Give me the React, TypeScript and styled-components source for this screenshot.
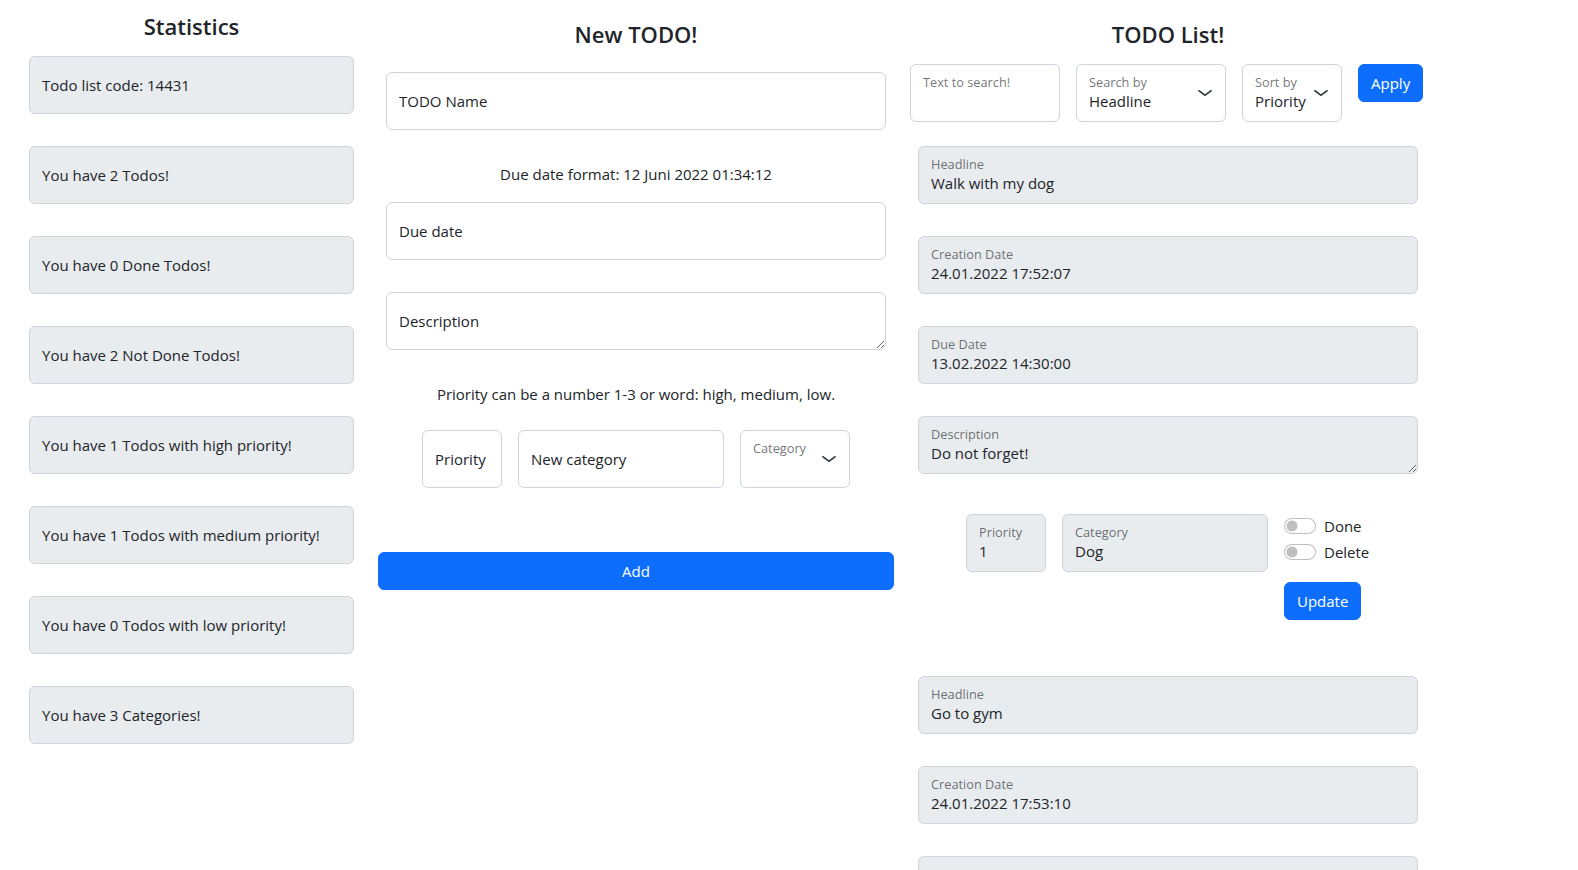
import React from "react";
import styled, { createGlobalStyle } from "styled-components";

const GlobalStyle = createGlobalStyle`
  html, body {
    margin: 0;
    padding: 0;
    background: #ffffff;
    scrollbar-width: none;
  }
  html::-webkit-scrollbar, body::-webkit-scrollbar { display: none; }
  body {
    font-family: "Open Sans", "Noto Sans", "DejaVu Sans", sans-serif;
    font-size: 15px;
    line-height: 24px;
    color: #212529;
  }
  *, *::before, *::after { box-sizing: border-box; }
`;

const Page = styled.main`
  display: flex;
  align-items: flex-start;
  padding-left: 29px;
`;

const Column = styled.section<{ $width: number; $after: number }>`
  flex: none;
  width: ${(p) => p.$width}px;
  margin-right: ${(p) => p.$after}px;
  display: flex;
  flex-direction: column;
`;

const Title = styled.h2<{ $top: number; $bottom: number }>`
  margin: ${(p) => p.$top}px 0 ${(p) => p.$bottom}px;
  font-size: 22px;
  font-weight: 600;
  line-height: 34px;
  text-align: center;
  color: #212529;
`;

/* ---------- Statistics ---------- */

const StatList = styled.div`
  display: flex;
  flex-direction: column;
  gap: 32px;
`;

const StatBox = styled.div`
  height: 58px;
  display: flex;
  align-items: center;
  padding: 0 12px;
  background: #e9ecef;
  border: 1px solid #ced4da;
  border-radius: 6px;
  font-size: 15px;
  color: #212529;
`;

/* ---------- Form controls ---------- */

const TextInput = styled.input<{ $width?: number; $top?: number }>`
  display: block;
  flex: none;
  width: ${(p) => (p.$width ? `${p.$width}px` : "100%")};
  height: 58px;
  margin-top: ${(p) => p.$top ?? 0}px;
  padding: 0 12px;
  border: 1px solid #ced4da;
  border-radius: 6px;
  background: #fff;
  font-family: inherit;
  font-size: 15px;
  line-height: 20px;
  color: #212529;
  outline: none;
  &::placeholder {
    color: #212529;
    opacity: 1;
  }
`;

const TextArea = styled.textarea<{ $top?: number; $muted?: boolean; $filled?: boolean }>`
  display: block;
  width: 100%;
  height: 58px;
  margin: ${(p) => p.$top ?? 0}px 0 0;
  padding: ${(p) => (p.$filled ? "26px 12px 10px" : "18px 12px 18px")};
  border: 1px solid #ced4da;
  border-radius: 6px;
  background: ${(p) => (p.$muted ? "#e9ecef" : "#fff")};
  font-family: inherit;
  font-size: 15px;
  line-height: 20px;
  color: #212529;
  resize: vertical;
  overflow: hidden;
  outline: none;
  &::placeholder {
    color: #212529;
    opacity: 1;
  }
`;

const Hint = styled.p<{ $top: number }>`
  margin: ${(p) => p.$top}px 0 0;
  text-align: center;
  font-size: 15px;
  line-height: 24px;
`;

const Field = styled.div<{ $muted?: boolean; $width?: number }>`
  flex: none;
  width: ${(p) => (p.$width ? `${p.$width}px` : "100%")};
  height: 58px;
  display: flex;
  align-items: flex-start;
  gap: 6px;
  padding: 0 12px;
  border: 1px solid #ced4da;
  border-radius: 6px;
  background: ${(p) => (p.$muted ? "#e9ecef" : "#fff")};
`;

const FieldText = styled.div`
  flex: 1;
  min-width: 0;
  display: flex;
  flex-direction: column;
  padding-top: 8px;
`;

const FieldLabel = styled.span`
  font-size: 12.75px;
  line-height: 18px;
  color: rgba(33, 37, 41, 0.65);
  white-space: nowrap;
`;

const FieldValue = styled.span`
  font-size: 15px;
  line-height: 20px;
  color: #212529;
  white-space: nowrap;
`;

const ChevronSvg = styled.svg`
  flex: none;
  align-self: center;
  width: 16px;
  height: 12px;
`;

const Chevron = () => (
  <ChevronSvg viewBox="0 0 16 16" preserveAspectRatio="none">
    <path
      d="m2 5 6 6 6-6"
      fill="none"
      stroke="#343a40"
      strokeWidth="2"
      strokeLinecap="round"
      strokeLinejoin="round"
    />
  </ChevronSvg>
);

const AreaWrap = styled.div<{ $top?: number }>`
  position: relative;
  margin-top: ${(p) => p.$top ?? 0}px;
`;

const AreaLabel = styled.span`
  position: absolute;
  top: 9px;
  left: 13px;
  font-size: 12.75px;
  line-height: 18px;
  color: rgba(33, 37, 41, 0.65);
  pointer-events: none;
`;

const Button = styled.button<{ $block?: boolean; $top?: number }>`
  flex: none;
  display: block;
  align-self: ${(p) => (p.$block ? "stretch" : "flex-start")};
  width: ${(p) => (p.$block ? "100%" : "auto")};
  height: 38px;
  margin-top: ${(p) => p.$top ?? 0}px;
  padding: 0 12px;
  border: 1px solid #0d6efd;
  border-radius: 6px;
  background: #0d6efd;
  color: #fff;
  font-family: inherit;
  font-size: 15px;
  line-height: 24px;
  cursor: pointer;
`;

/* ---------- New TODO ---------- */

const FormBody = styled.div`
  display: flex;
  flex-direction: column;
  padding: 0 8px;
`;

const InlineRow = styled.div<{ $top: number }>`
  display: flex;
  justify-content: center;
  align-items: flex-start;
  gap: 16px;
  margin-top: ${(p) => p.$top}px;
`;

/* ---------- TODO list ---------- */

const Toolbar = styled.div`
  display: flex;
  align-items: flex-start;
  gap: 16px;
`;

const TodoList = styled.div`
  display: flex;
  flex-direction: column;
  gap: 56px;
  padding: 24px 8px 0;
`;

const TodoCard = styled.article`
  display: flex;
  flex-direction: column;
  gap: 32px;
`;

const CardRow = styled.div`
  display: flex;
  justify-content: center;
  align-items: flex-start;
  gap: 16px;
  margin-top: 8px;
`;

const SwitchCol = styled.div`
  flex: none;
  width: 86px;
  display: flex;
  flex-direction: column;
  align-items: flex-start;
`;

const SwitchRow = styled.label`
  display: flex;
  align-items: center;
  gap: 8px;
  height: 24px;
  margin-bottom: 2px;
  font-size: 15px;
  white-space: nowrap;
`;

const Switch = styled.span`
  flex: none;
  width: 32px;
  height: 16px;
  border: 1px solid rgba(0, 0, 0, 0.25);
  border-radius: 8px;
  background: radial-gradient(circle at 7px 50%, #bfbfbf 0 5.2px, transparent 5.8px), #fff;
`;

type Todo = {
  headline: string;
  created: string;
  due: string;
  description: string;
  priority: string;
  category: string;
};

const todos: Todo[] = [
  {
    headline: "Walk with my dog",
    created: "24.01.2022 17:52:07",
    due: "13.02.2022 14:30:00",
    description: "Do not forget!",
    priority: "1",
    category: "Dog",
  },
  {
    headline: "Go to gym",
    created: "24.01.2022 17:53:10",
    due: "15.02.2022 18:00:00",
    description: "Leg day",
    priority: "2",
    category: "Sport",
  },
];

const stats = [
  "Todo list code: 14431",
  "You have 2 Todos!",
  "You have 0 Done Todos!",
  "You have 2 Not Done Todos!",
  "You have 1 Todos with high priority!",
  "You have 1 Todos with medium priority!",
  "You have 0 Todos with low priority!",
  "You have 3 Categories!",
];

const ValueField = ({ label, value, width }: { label: string; value: string; width?: number }) => (
  <Field $muted $width={width}>
    <FieldText>
      <FieldLabel>{label}</FieldLabel>
      <FieldValue>{value}</FieldValue>
    </FieldText>
  </Field>
);

const TodoItem = ({ todo }: { todo: Todo }) => (
  <TodoCard>
    <ValueField label="Headline" value={todo.headline} />
    <ValueField label="Creation Date" value={todo.created} />
    <ValueField label="Due Date" value={todo.due} />
    <AreaWrap>
      <TextArea $muted $filled readOnly value={todo.description} />
      <AreaLabel>Description</AreaLabel>
    </AreaWrap>
    <CardRow>
      <ValueField label="Priority" value={todo.priority} width={80} />
      <ValueField label="Category" value={todo.category} width={206} />
      <SwitchCol>
        <SwitchRow>
          <Switch />
          Done
        </SwitchRow>
        <SwitchRow>
          <Switch />
          Delete
        </SwitchRow>
        <Button $top={16}>Update</Button>
      </SwitchCol>
    </CardRow>
  </TodoCard>
);

export default function App() {
  return (
    <>
      <GlobalStyle />
      <Page>
        <Column $width={325} $after={24}>
          <Title $top={9} $bottom={13}>
            Statistics
          </Title>
          <StatList>
            {stats.map((s) => (
              <StatBox key={s}>{s}</StatBox>
            ))}
          </StatList>
        </Column>

        <Column $width={516} $after={16}>
          <Title $top={17} $bottom={21}>
            New TODO!
          </Title>
          <FormBody>
            <TextInput placeholder="TODO Name" />
            <Hint $top={32}>Due date format: 12 Juni 2022 01:34:12</Hint>
            <TextInput $top={16} placeholder="Due date" />
            <TextArea $top={32} placeholder="Description" />
            <Hint $top={32}>Priority can be a number 1-3 or word: high, medium, low.</Hint>
            <InlineRow $top={24}>
              <TextInput $width={80} placeholder="Priority" />
              <TextInput $width={206} placeholder="New category" />
              <Field $width={110}>
                <FieldText>
                  <FieldLabel>Category</FieldLabel>
                </FieldText>
                <Chevron />
              </Field>
            </InlineRow>
          </FormBody>
          <Button $block $top={64}>
            Add
          </Button>
        </Column>

        <Column $width={516} $after={0}>
          <Title $top={17} $bottom={13}>
            TODO List!
          </Title>
          <Toolbar>
            <Field $width={150}>
              <FieldText>
                <FieldLabel>Text to search!</FieldLabel>
              </FieldText>
            </Field>
            <Field $width={150}>
              <FieldText>
                <FieldLabel>Search by</FieldLabel>
                <FieldValue>Headline</FieldValue>
              </FieldText>
              <Chevron />
            </Field>
            <Field $width={100}>
              <FieldText>
                <FieldLabel>Sort by</FieldLabel>
                <FieldValue>Priority</FieldValue>
              </FieldText>
              <Chevron />
            </Field>
            <Button>Apply</Button>
          </Toolbar>
          <TodoList>
            {todos.map((t) => (
              <TodoItem key={t.headline} todo={t} />
            ))}
          </TodoList>
        </Column>
      </Page>
    </>
  );
}
